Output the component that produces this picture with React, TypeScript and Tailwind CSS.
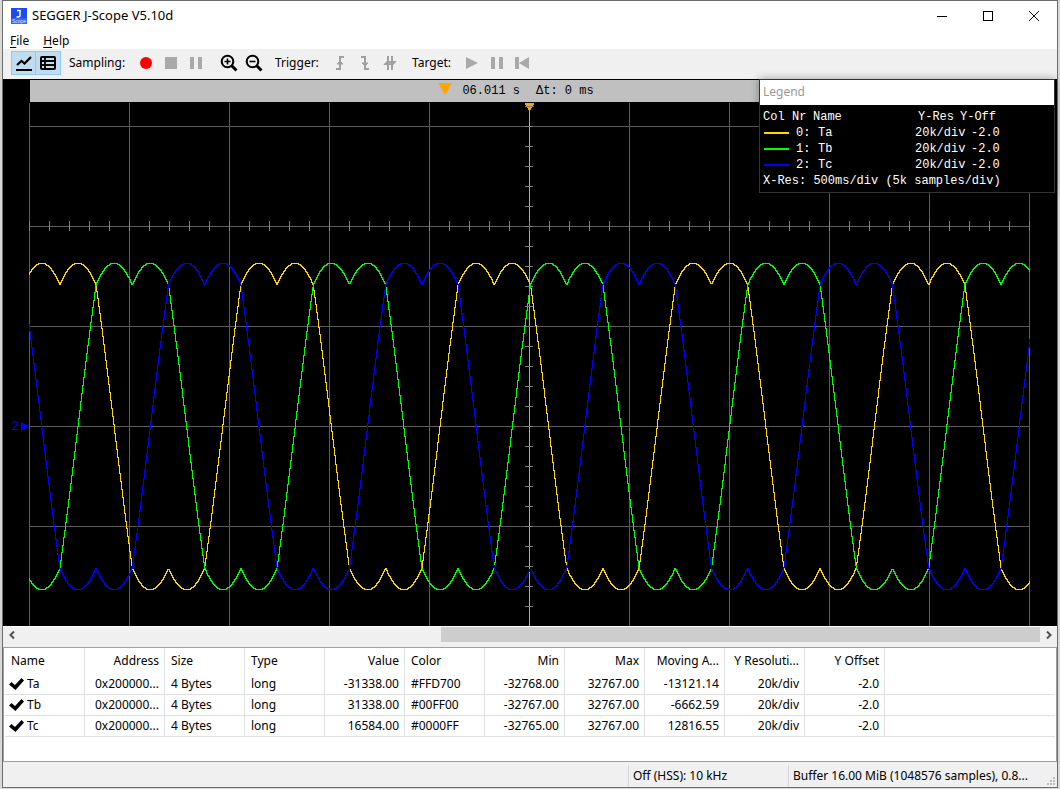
import type { ReactNode } from "react";

const CHANNELS = [
    { name: "Ta", color: "#FFD700", phase: 30.4, value: "-31338.00", min: "-32768.00", avg: "-13121.14" },
    { name: "Tb", color: "#00FF00", phase: 102.8, value: "31338.00", min: "-32767.00", avg: "-6662.59" },
    { name: "Tc", color: "#0000FF", phase: 175.2, value: "16584.00", min: "-32765.00", avg: "12816.55" },
];

const HEADERS = [
    { label: "Name", right: false },
    { label: "Address", right: true },
    { label: "Size", right: false },
    { label: "Type", right: false },
    { label: "Value", right: true },
    { label: "Color", right: false },
    { label: "Min", right: true },
    { label: "Max", right: true },
    { label: "Moving A...", right: true },
    { label: "Y Resoluti...", right: true },
    { label: "Y Offset", right: true },
];

const PERIOD = 217.2;
const MID = 324;
const AMPLITUDE = 163.3;

// space vector modulated sine: each phase minus the mean of the largest and smallest
function sample(x: number, phase: number) {
    const t = ((x - phase) / PERIOD) * Math.PI * 2;
    const a = Math.cos(t);
    const b = Math.cos(t - (Math.PI * 2) / 3);
    const c = Math.cos(t + (Math.PI * 2) / 3);
    const v = (a - (Math.max(a, b, c) + Math.min(a, b, c)) / 2) / 0.866;
    return Math.round(MID - v * AMPLITUDE);
}

// one vertical run per column, so the trace has hard steps
function wave(phase: number) {
    let d = "";
    for (let x = 0; x <= 1000; x++) {
        const y1 = sample(x - 0.5, phase);
        const y2 = sample(x + 0.5, phase);
        const top = Math.min(y1, y2);
        const bottom = Math.max(y1, y2);
        d += `M${x + 0.5} ${top}V${bottom + 1}`;
    }
    return d;
}

function range(from: number, to: number, step: number) {
    const out: number[] = [];
    for (let i = from; i <= to; i += step) out.push(i);
    return out;
}

function ToolButton({ label, children }: { label: string; children: ReactNode }) {
    return (
        <button aria-label={label} className="flex h-6 w-[25px] items-center justify-center">
            {children}
        </button>
    );
}

function AppIcon() {
    return (
        <svg viewBox="0 0 16 16" className="h-4 w-4 shrink-0">
            <rect width="16" height="16" fill="#1a4cf0" />
            <rect y="10" width="16" height="6" fill="#3a63f2" />
            <path d="M6 2.500h3v4.500q0 2-2 2H5.500" fill="none" stroke="#fff" strokeWidth="1.500" />
            <text x="8" y="15" textAnchor="middle" fontSize="5" fill="#dfe6ff" fontFamily="Liberation Sans, sans-serif">
                Scope
            </text>
        </svg>
    );
}

function TitleBar() {
    return (
        <header className="flex h-[30px] items-stretch justify-between bg-white">
            <div className="flex items-center gap-[5px] pl-2">
                <AppIcon />
                <h1 className="text-[13px]">SEGGER J-Scope V5.10d</h1>
            </div>
            <div className="flex pb-px">
                <button aria-label="Minimize" className="flex w-[46px] items-center justify-center">
                    <svg viewBox="0 0 10 10" className="h-[10px] w-[10px]">
                        <path d="M0 5.5h10" stroke="#000" />
                    </svg>
                </button>
                <button aria-label="Maximize" className="flex w-[46px] items-center justify-center">
                    <svg viewBox="0 0 10 10" className="h-[10px] w-[10px]">
                        <rect x=".5" y=".5" width="9" height="9" fill="none" stroke="#000" />
                    </svg>
                </button>
                <button aria-label="Close" className="flex w-[46px] items-center justify-center">
                    <svg viewBox="0 0 10 10" className="h-[10px] w-[10px]">
                        <path d="M0 0l10 10M10 0L0 10" stroke="#000" />
                    </svg>
                </button>
            </div>
        </header>
    );
}

function MenuBar() {
    return (
        <nav className="flex h-[18px] items-end gap-[14px] bg-white pl-[7px]">
            <button>
                <span className="underline underline-offset-2">F</span>ile
            </button>
            <button>
                <span className="underline underline-offset-2">H</span>elp
            </button>
        </nav>
    );
}

function Magnifier({ plus }: { plus: boolean }) {
    return (
        <svg viewBox="0 0 18 18" className="h-[18px] w-[18px]" fill="none" stroke="#000">
            <circle cx="7.5" cy="7.5" r="5.8" strokeWidth="2" />
            <path d="M11.5 11.5l5 5" strokeWidth="3" />
            <path d={plus ? "M4.5 7.5h6M7.5 4.5v6" : "M4.5 7.5h6"} strokeWidth="1.6" />
        </svg>
    );
}

function Toolbar() {
    return (
        <div className="flex h-[30px] items-center bg-[#f0f0f0] pb-[2px] pl-2">
            <button
                aria-label="Show graph"
                aria-pressed="true"
                className="flex h-6 w-[25px] items-center justify-center border border-[#90c8f6] bg-[#bfdcf1]"
            >
                <svg viewBox="0 0 18 16" className="h-4 w-[18px]" fill="none" stroke="#000">
                    <path d="M2 10l4.500-4 3 2.500 6.500-6.500" strokeWidth="2.200" />
                    <path d="M1 15h16" strokeWidth="2" />
                </svg>
            </button>
            <button
                aria-label="Show table"
                aria-pressed="true"
                className="flex h-6 w-[25px] items-center justify-center border border-l-0 border-[#90c8f6] bg-[#bfdcf1]"
            >
                <svg viewBox="0 0 16 14" className="h-[14px] w-4" fill="none" stroke="#000" strokeWidth="2">
                    <rect x="1" y="1" width="14" height="12" rx="1" />
                    <path d="M5 1v12M1 5h14M1 9h14" strokeWidth="1.800" />
                </svg>
            </button>
            <span className="w-[72px] pl-2">Sampling:</span>
            <ToolButton label="Record">
                <span className="h-3 w-3 rounded-full bg-[#ff0000]" />
            </ToolButton>
            <ToolButton label="Stop">
                <span className="h-3 w-3 bg-[#a9a9a9]" />
            </ToolButton>
            <ToolButton label="Pause">
                <span className="h-3 w-3 border-x-4 border-[#a9a9a9]" />
            </ToolButton>
            <div className="ml-2 flex">
                <ToolButton label="Zoom in">
                    <Magnifier plus />
                </ToolButton>
                <ToolButton label="Zoom out">
                    <Magnifier plus={false} />
                </ToolButton>
            </div>
            <span className="w-[61px] pl-[9px]">Trigger:</span>
            <ToolButton label="Rising edge">
                <svg viewBox="0 0 10 14" className="h-[14px] w-[10px]" fill="none" stroke="#a0a0a0" strokeWidth="2">
                    <path d="M1 13h4V1h4" />
                    <path d="M2 8l3-3 3 3z" fill="#a0a0a0" strokeWidth="1" />
                </svg>
            </ToolButton>
            <ToolButton label="Falling edge">
                <svg viewBox="0 0 10 14" className="h-[14px] w-[10px]" fill="none" stroke="#a0a0a0" strokeWidth="2">
                    <path d="M1 1h4v12h4" />
                    <path d="M2 7l3 3 3-3z" fill="#a0a0a0" strokeWidth="1" />
                </svg>
            </ToolButton>
            <ToolButton label="Both edges">
                <svg viewBox="0 0 14 14" className="h-[14px] w-[14px]" fill="none" stroke="#a0a0a0" strokeWidth="2">
                    <path d="M5 0v14M9 0v14" />
                    <path d="M1 8.500h7l-3.500-3.500zM6 5.500h7l-3.500 3.500z" fill="#a0a0a0" strokeWidth="1" />
                </svg>
            </ToolButton>
            <span className="w-[57px] pl-[10px]">Target:</span>
            <ToolButton label="Run">
                <svg viewBox="0 0 12 12" className="h-3 w-3">
                    <path d="M0 0l12 6-12 6z" fill="#a9a9a9" />
                </svg>
            </ToolButton>
            <ToolButton label="Halt">
                <span className="h-3 w-3 border-x-4 border-[#a9a9a9]" />
            </ToolButton>
            <ToolButton label="Reset">
                <svg viewBox="0 0 14 12" className="h-3 w-[14px]">
                    <path d="M0 0h4v12H0zM14 0v12L4 6z" fill="#a9a9a9" />
                </svg>
            </ToolButton>
        </div>
    );
}

function Legend() {
    return (
        <aside className="absolute top-0 right-[2px] w-[296px] border border-[#333333] bg-black text-white shadow-[0_0_8px_rgba(0,0,0,0.35)]">
            <h2 className="h-[25px] bg-white pl-[3px] leading-6 text-[#999999]">Legend</h2>
            <div className="px-[3px] pt-1 pb-[3px] font-['Liberation_Mono',monospace] text-xs leading-4">
                <table className="border-separate border-spacing-0">
                    <thead>
                        <tr className="text-left">
                            <th className="w-[29px] p-0 font-normal">Col</th>
                            <th className="w-[21px] p-0 font-normal">Nr</th>
                            <th className="w-[102px] p-0 font-normal">Name</th>
                            <th className="w-[45px] p-0 pl-[3px] font-normal">Y-Res</th>
                            <th className="p-0 font-normal">Y-Off</th>
                        </tr>
                    </thead>
                </table>
                <table className="border-separate border-spacing-0">
                    <tbody>
                        {CHANNELS.map((c, i) => (
                            <tr key={c.name}>
                                <td className="w-[33px] p-0 pl-px">
                                    <div className="h-[2px] w-[25px]" style={{ background: c.color }} />
                                </td>
                                <td className="w-[22px] p-0">{i}:</td>
                                <td className="w-[97px] p-0">{c.name}</td>
                                <td className="w-[56px] p-0">20k/div</td>
                                <td className="p-0">-2.0</td>
                            </tr>
                        ))}
                    </tbody>
                </table>
                <p className="whitespace-nowrap">X-Res: 500ms/div (5k samples/div)</p>
            </div>
        </aside>
    );
}

function Plot() {
    return (
        <section className="relative flex min-h-0 flex-1 flex-col bg-black pt-px">
            <div className="ml-[27px] mr-[27px] flex h-[22px] items-center justify-center bg-[#c0c0c0] font-['Liberation_Mono',monospace] text-xs text-black">
                <div className="mr-7 flex items-center">
                    <svg viewBox="0 0 14 12" className="mr-[10px] mb-1 h-3 w-[14px]">
                        <path d="M0 0h14L7 12z" fill="#ffa500" />
                    </svg>
                    <span className="mr-4">06.011 s</span>
                    <span>Δt: 0 ms</span>
                </div>
            </div>
            <div className="flex min-h-0 flex-1">
                <div className="relative w-[26px] shrink-0">
                    <div className="absolute top-[62%] right-0 flex -translate-y-1/2 items-center gap-[2px] font-['Liberation_Mono',monospace] text-xs leading-3 text-[#0000ff]">
                        2
                        <svg viewBox="0 0 8 9" className="h-[9px] w-2">
                            <path d="M0 0l8 4.500L0 9z" fill="#0000ff" />
                        </svg>
                    </div>
                </div>
                <svg
                    viewBox="0 0 1001 524"
                    preserveAspectRatio="none"
                    className="h-full min-w-0 flex-1"
                    fill="none"
                    shapeRendering="crispEdges"
                >
                    <g stroke="#5c5c5c">
                        {range(0, 1000, 100).map((x) => (
                            <path key={x} d={`M${x + 0.5} 1V524`} />
                        ))}
                        {range(24, 424, 100).map((y) => (
                            <path key={y} d={`M0 ${y + 0.5}H1001`} />
                        ))}
                    </g>
                    <path d="M500.500 1V524" stroke="#ffa500" />
                    <g stroke="#808080">
                        {range(0, 1000, 20).map((x) => (
                            <path key={x} d={`M${x + 0.5} 119V129`} />
                        ))}
                        {range(4, 504, 20).map((y) => (
                            <path key={y} d={`M496 ${y + 0.5}H504`} />
                        ))}
                    </g>
                    {CHANNELS.map((c) => (
                        <path key={c.name} d={wave(c.phase)} stroke={c.color} />
                    ))}
                    <path d="M496 1h9v2h-1v2h-1v1h-1v2h-3v-2h-1v-1h-1v-2h-1z" fill="#ffa500" />
                    <path d="M497 4.500h8" stroke="#808080" />
                </svg>
                <div className="w-[27px] shrink-0" />
            </div>
            <Legend />
        </section>
    );
}

function ScrollBar() {
    return (
        <div className="flex h-[21px] border-t border-white bg-[#f0f0f0] pb-[5px]">
            <button aria-label="Scroll left" className="flex w-[17px] items-center justify-center">
                <svg viewBox="0 0 6 8" className="h-2 w-[6px]" fill="none" stroke="#505050" strokeWidth="2">
                    <path d="M5 .5L1.500 4 5 7.500" />
                </svg>
            </button>
            <div className="flex flex-1">
                <div className="flex-[421]" />
                <div className="flex-[599] bg-[#cdcdcd]" />
            </div>
            <button aria-label="Scroll right" className="flex w-[17px] items-center justify-center">
                <svg viewBox="0 0 6 8" className="h-2 w-[6px]" fill="none" stroke="#505050" strokeWidth="2">
                    <path d="M1 .5L4.500 4 1 7.500" />
                </svg>
            </button>
        </div>
    );
}

function Cell({ right = false, children }: { right?: boolean; children?: ReactNode }) {
    return (
        <td
            className={
                right
                    ? "border-r border-b border-[#e0e0e0] p-0 pr-[5px] text-right"
                    : "border-r border-b border-[#e0e0e0] p-0 pl-[6px] text-left"
            }
        >
            {children}
        </td>
    );
}

function SymbolTable() {
    return (
        <div className="h-[115px] border border-[#a0a0a0] bg-white px-px">
            <table className="w-full table-fixed border-separate border-spacing-0 whitespace-nowrap">
                <thead>
                    <tr className="h-[26px]">
                        {HEADERS.map((h) => (
                            <th
                                key={h.label}
                                className={
                                    h.right
                                        ? "w-20 border-r border-[#e0e0e0] p-0 pr-[5px] text-right font-normal"
                                        : "w-20 border-r border-[#e0e0e0] p-0 pl-[6px] text-left font-normal"
                                }
                            >
                                {h.label}
                            </th>
                        ))}
                        <td />
                    </tr>
                </thead>
                <tbody>
                    {CHANNELS.map((c) => (
                        <tr key={c.name} className="h-[21px]">
                            <td className="border-r border-b border-[#e0e0e0] p-0 pl-1">
                                <label className="flex items-center gap-[3px]">
                                    <input type="checkbox" defaultChecked className="sr-only" />
                                    <svg viewBox="0 0 15 12" className="h-3 w-[15px]">
                                        <path d="M0 6.500l2.500-2.500L6 7 12.500 0 15 2.500 6.500 12z" fill="#000" />
                                    </svg>
                                    {c.name}
                                </label>
                            </td>
                            <Cell right>0x200000...</Cell>
                            <Cell>4 Bytes</Cell>
                            <Cell>long</Cell>
                            <Cell right>{c.value}</Cell>
                            <Cell>{c.color}</Cell>
                            <Cell right>{c.min}</Cell>
                            <Cell right>32767.00</Cell>
                            <Cell right>{c.avg}</Cell>
                            <Cell right>20k/div</Cell>
                            <Cell right>-2.0</Cell>
                            <td className="border-b border-[#e0e0e0]" />
                        </tr>
                    ))}
                </tbody>
            </table>
        </div>
    );
}

function StatusBar() {
    return (
        <footer className="flex h-[25px] items-stretch justify-end bg-[#f0f0f0] pt-[3px] whitespace-nowrap">
            <div className="flex w-40 items-center border-l border-[#d7d7d7] pl-1">Off (HSS): 10 kHz</div>
            <div className="flex w-[269px] items-center justify-between border-l border-[#d7d7d7] pr-[2px] pl-1">
                Buffer 16.00 MiB (1048576 samples), 0.8...
                <svg viewBox="0 0 8 8" className="mb-[2px] h-2 w-2 self-end" fill="#bdbdbd">
                    <path d="M6 0h2v2H6zM3 3h2v2H3zM6 3h2v2H6zM0 6h2v2H0zM3 6h2v2H3zM6 6h2v2H6z" />
                </svg>
            </div>
        </footer>
    );
}

export default function App() {
    return (
        <div className="h-screen min-h-[480px] bg-[#d9d9d9] pr-[2px] pb-px pl-[2px] font-['Noto_Sans',sans-serif] text-xs text-black">
            <main className="flex h-full flex-col border border-[#6d6d6d]">
                <TitleBar />
                <MenuBar />
                <Toolbar />
                <Plot />
                <ScrollBar />
                <SymbolTable />
                <StatusBar />
            </main>
        </div>
    );
}
